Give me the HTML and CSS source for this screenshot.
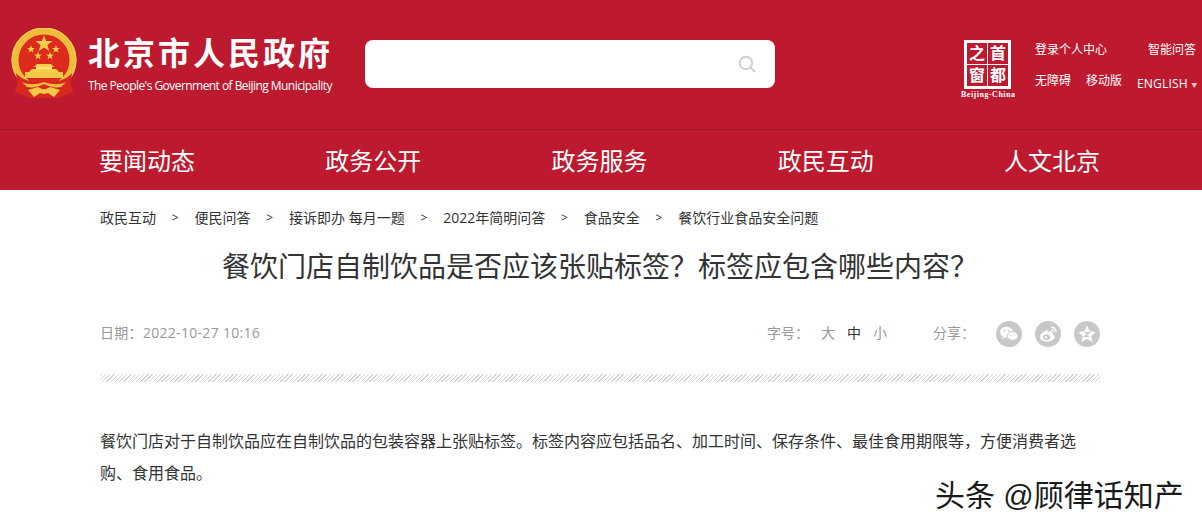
FILE: index.html
```html
<!DOCTYPE html>
<html lang="zh-CN">
<head>
    <meta charset="UTF-8">
    <title>餐饮门店自制饮品是否应该张贴标签&#65311;标签应包含哪些内容&#65311;</title>
    <link rel="stylesheet" href="styles.css">
</head>
<body>

    <div class="header">
        <svg class="emblem" width="68" height="72" viewBox="0 0 68 72">
            <path d="M9 50 L5 64 L20 70 H48 L63 64 L59 50 Z" fill="#d9291f"/>
            <circle cx="34" cy="32" r="29" fill="#dc2a1c" stroke="#efbd3a" stroke-width="7"/>
            <circle cx="34" cy="32" r="32" fill="none" stroke="#f6d45a" stroke-width="1"/>
            <polygon points="34,7 36.1,13 42.5,13 37.4,17 39.3,23 34,19.4 28.7,23 30.6,17 25.5,13 31.9,13" fill="#f6cf45"/>
            <polygon points="21,17 22,20 25,20 22.6,21.8 23.5,24.8 21,23 18.5,24.8 19.4,21.8 17,20 20,20" fill="#f6cf45"/>
            <polygon points="46,17 47,20 50,20 47.6,21.8 48.5,24.8 46,23 43.5,24.8 44.4,21.8 42,20 45,20" fill="#f6cf45"/>
            <polygon points="28,23.5 29,26.5 32,26.5 29.6,28.3 30.5,31.3 28,29.5 25.5,31.3 26.4,28.3 24,26.5 27,26.5" fill="#f6cf45"/>
            <polygon points="40,23.5 41,26.5 44,26.5 41.6,28.3 42.5,31.3 40,29.5 37.5,31.3 38.4,28.3 36,26.5 39,26.5" fill="#f6cf45"/>
            <path d="M27 36 H41 L44 39 H24 Z" fill="#f6cf45"/>
            <rect x="26" y="39" width="16" height="2" fill="#f9e08a"/>
            <path d="M22 41 H46 L49 44 H19 Z" fill="#f6cf45"/>
            <rect x="15" y="44" width="38" height="6" fill="#f3c846"/>
            <path d="M6 45 C12 52 20 54 28 53 L34 54 L40 53 C48 54 56 52 62 45 L60 60 C52 66 44 64 34 61 C24 64 16 66 8 60 Z" fill="#d9291f"/>
            <path d="M12 54 C18 57 26 57 34 54 C42 57 50 57 56 54 L51 59 C46 60 40 59 34 56 C28 59 22 60 17 59 Z" fill="#efbd3a"/>
            <path d="M18 62 L28 59 L34 62 L40 59 L50 62 L44 69 L38 65 L34 66 L30 65 L24 69 Z" fill="#f3c846"/>
        </svg>
        <div class="site-name">
            <div class="site-cn">北京市人民政府</div>
            <div class="site-en">The People's Government of Beijing Municipality</div>
        </div>
        <div class="search">
            <svg width="20" height="20" viewBox="0 0 20 20">
                <circle cx="9" cy="9" r="6.2" fill="none" stroke="#cfcfcf" stroke-width="2"/>
                <path d="M13.5 13.5 L18 18" stroke="#cfcfcf" stroke-width="2"/>
            </svg>
        </div>
        <div class="capital">
            <div class="capital-box">
                <span>之</span><span>首</span><span>窗</span><span>都</span>
            </div>
            <div class="capital-en">Beijing-China</div>
        </div>
        <div class="top-links">
            <div class="top-row">
                <a class="link-login">登录个人中心</a>
                <a>智能问答</a>
            </div>
            <div class="top-row top-row-2">
                <a class="link-access">无障碍</a>
                <a class="link-mobile">移动版</a>
                <a class="link-en">ENGLISH <i>▼</i></a>
            </div>
        </div>
    </div>

    <div class="nav">
        <a>要闻动态</a>
        <a>政务公开</a>
        <a>政务服务</a>
        <a>政民互动</a>
        <a>人文北京</a>
    </div>

    <div class="content">
        <div class="crumbs">
            <a>政民互动</a><span>&gt;</span>
            <a>便民问答</a><span>&gt;</span>
            <a>接诉即办 每月一题</a><span>&gt;</span>
            <a>2022年简明问答</a><span>&gt;</span>
            <a>食品安全</a><span>&gt;</span>
            <a>餐饮行业食品安全问题</a>
        </div>
        <h1 class="title">餐饮门店自制饮品是否应该张贴标签&#65311;标签应包含哪些内容&#65311;</h1>
        <div class="meta">
            <div class="date">日期&#65306;2022-10-27 10:16</div>
            <div class="font-size">字号&#65306;</div>
            <div class="sizes"><a>大</a><a class="current">中</a><a>小</a></div>
            <div class="share">分享&#65306;</div>
            <div class="share-icons">
                <a class="share-icon">
                    <svg width="26" height="26" viewBox="0 0 26 26">
                        <ellipse cx="10.5" cy="11" rx="6.5" ry="5.3" fill="#fff"/>
                        <path d="M7 15 L6 18 L10 16 Z" fill="#fff"/>
                        <ellipse cx="16.5" cy="15" rx="5.5" ry="4.4" fill="#fff" stroke="#c8c8c8"/>
                        <circle cx="8.4" cy="9.6" r="0.9" fill="#c8c8c8"/>
                        <circle cx="12.6" cy="9.6" r="0.9" fill="#c8c8c8"/>
                        <circle cx="14.6" cy="14" r="0.7" fill="#c8c8c8"/>
                        <circle cx="18.4" cy="14" r="0.7" fill="#c8c8c8"/>
                    </svg>
                </a>
                <a class="share-icon">
                    <svg width="26" height="26" viewBox="0 0 26 26">
                        <path d="M11 9.5 C7 11 4.5 14 5 16.5 C5.6 19.5 9 21 13 20.5 C17 20 20 17.8 19.8 15.4 C19.6 13.8 18 13.4 17.4 13 C18 11.4 17.4 10.2 15.4 10.2 C14.4 10.2 13.4 10.6 12.6 11 C12.8 9.6 12.4 9 11 9.5 Z" fill="#fff"/>
                        <ellipse cx="11.6" cy="16.2" rx="3.6" ry="2.8" fill="#c8c8c8"/>
                        <circle cx="11" cy="16.4" r="1.2" fill="#fff"/>
                        <path d="M16 6.5 C19 6 21.5 8.5 21 11.5 M16.4 9 C17.8 8.8 18.8 9.8 18.6 11" fill="none" stroke="#fff" stroke-width="1.3"/>
                    </svg>
                </a>
                <a class="share-icon">
                    <svg width="26" height="26" viewBox="0 0 26 26">
                        <polygon points="13,4.5 15.6,10.2 21.8,10.9 17.2,15 18.5,21 13,18 7.5,21 8.8,15 4.2,10.9 10.4,10.2" fill="#fff"/>
                        <path d="M10.6 11.6 H15.2 L10.8 15.4 H15.4" fill="none" stroke="#c8c8c8" stroke-width="1.3"/>
                    </svg>
                </a>
            </div>
        </div>
        <div class="stripes"></div>
        <p class="article">餐饮门店对于自制饮品应在自制饮品的包装容器上张贴标签。标签内容应包括品名、加工时间、保存条件、最佳食用期限等&#65292;方便消费者选购、食用食品。</p>
    </div>

    <div class="watermark">头条 @顾律话知产</div>

</body>
</html>
```

FILE: styles.css
```css
* {
  box-sizing: border-box;
}

html,
body {
  margin: 0;
  height: 527px;
  overflow: hidden;
}

body {
  position: relative;
  background-color: #fff;
  font-family: "Open Sans", "Noto Sans CJK SC", sans-serif;
  color: #333;
}

.header {
  display: flex;
  height: 130px;
  background-color: #be1a2f;
  color: #fff;
  border-bottom: 1px solid #9c1526;
  padding: 28px 0 0 10px;
}

.emblem {
  flex: none;
  margin-right: 10px;
}

.site-name {
  width: 277px;
  flex: none;
  white-space: nowrap;
}

.site-cn {
  font-size: 32px;
  font-weight: bold;
  line-height: 50px;
  letter-spacing: 3px;
}

.site-en {
  font-size: 12px;
  line-height: 16px;
  letter-spacing: -0.55px;
}

.search {
  display: flex;
  align-items: center;
  justify-content: flex-end;
  flex: none;
  width: 410px;
  height: 48px;
  margin-top: 12px;
  padding-right: 18px;
  background-color: #fff;
  border-radius: 8px;
}

.capital {
  flex: none;
  width: 54px;
  margin: 12px 0 0 186px;
}

.capital-box {
  display: grid;
  grid-template-columns: 1fr 1fr;
  width: 47px;
  height: 49px;
  gap: 1px;
  margin-left: 3px;
  padding: 3px;
  background-color: #fff;
}

.capital-box span {
  background-color: #be1a2f;
  font-size: 16px;
  font-weight: bold;
  line-height: 21px;
  text-align: center;
}

.capital-en {
  margin-top: 1px;
  font-family: "Liberation Serif", serif;
  font-size: 8px;
  font-weight: bold;
  line-height: 10px;
  white-space: nowrap;
  letter-spacing: 0.5px;
}

.top-links {
  margin-left: 20px;
  font-size: 12px;
  white-space: nowrap;
}

.top-row {
  display: flex;
  margin-top: 13px;
  line-height: 17px;
}

.top-row-2 {
  margin-top: 14px;
}

.link-login {
  width: 113px;
}

.link-access {
  width: 51px;
}

.link-mobile {
  width: 51px;
}

.link-en {
  margin-top: 3px;
  letter-spacing: 0.2px;
}

.link-en i {
  font-size: 6px;
  font-style: normal;
  opacity: 0.7;
  vertical-align: 1px;
}

.nav {
  display: flex;
  justify-content: space-between;
  height: 60px;
  padding: 0 102px 0 99px;
  background-color: #be1a2f;
  color: #fff;
  font-size: 24px;
  line-height: 62px;
}

.content {
  width: 1000px;
  margin-left: 100px;
}

.crumbs {
  display: flex;
  height: 56px;
  font-size: 14px;
  line-height: 56px;
  white-space: nowrap;
}

.crumbs a {
  flex: none;
}

.crumbs span {
  width: 38.5px;
  text-align: center;
  font-size: 12px;
}

.title {
  margin: -2px 0 0;
  font-size: 28px;
  font-weight: normal;
  line-height: 44px;
  text-align: center;
}

.meta {
  display: flex;
  align-items: center;
  height: 34px;
  margin-top: 27px;
  font-size: 14px;
  color: #999;
}

.date {
  width: 667px;
  letter-spacing: 0.3px;
}

.font-size {
  width: 54px;
}

.sizes {
  display: flex;
  gap: 12px;
  width: 112px;
}

.sizes .current {
  color: #333;
}

.share {
  width: 63px;
}

.share-icons {
  display: flex;
  gap: 13px;
  margin-top: 3px;
}

.share-icon {
  display: block;
  width: 26px;
  height: 26px;
  border-radius: 50%;
  background-color: #c8c8c8;
}

.share-icon svg {
  display: block;
}

.stripes {
  height: 8px;
  margin-top: 25px;
  background: repeating-linear-gradient(-45deg, #d4d4d4 0, #d4d4d4 1px, #fff 1px, #fff 3px);
}

.article {
  width: 990px;
  margin: 43px 0 0;
  font-size: 16px;
  line-height: 32px;
}

.watermark {
  position: absolute;
  left: 935px;
  top: 475px;
  font-family: "Liberation Sans", "Noto Sans CJK SC", sans-serif;
  font-size: 30px;
  line-height: 42px;
  color: #1a1a1a;
  white-space: nowrap;
  text-shadow: 1px 1px 1px #fff;
}
```
